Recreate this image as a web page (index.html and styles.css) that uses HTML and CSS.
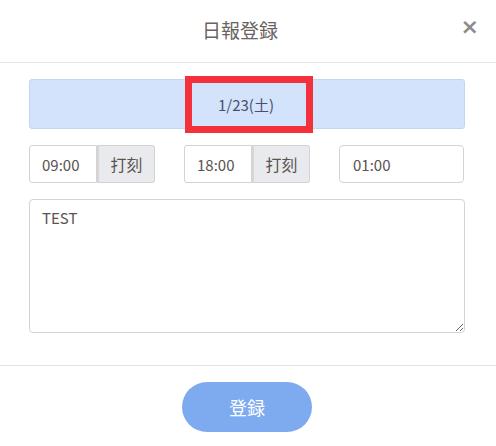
FILE: index.html
```html
<!DOCTYPE html>
<html lang="ja">
<head>
<meta charset="utf-8">
<link rel="stylesheet" href="styles.css">
</head>
<body>
<div class="modal">
  <div class="modal-header">
    <h1 class="title">日報登録</h1>
    <span class="close">×</span>
  </div>
  <div class="modal-body">
    <div class="date-bar">
      <span class="date-text">1/23(土)</span>
      <span class="highlight"></span>
    </div>
    <div class="time-row">
      <div class="group">
        <div class="field">09:00</div>
        <div class="stamp">打刻</div>
      </div>
      <div class="group">
        <div class="field">18:00</div>
        <div class="stamp">打刻</div>
      </div>
      <div class="group">
        <div class="field single">01:00</div>
      </div>
    </div>
    <textarea class="memo">TEST</textarea>
  </div>
  <div class="modal-footer">
    <button class="submit">登録</button>
  </div>
</div>
</body>
</html>
```
FILE: styles.css
```css
* { box-sizing: border-box; }
html, body { margin: 0; padding: 0; background: #fff; }
body {
  font-family: "Noto Sans CJK JP", "Open Sans", sans-serif;
  color: #5a5350;
  width: 496px;
  height: 446px;
  overflow: hidden;
}
.modal-header {
  height: 63px;
  border-bottom: 1px solid #e3e3e3;
  display: flex;
  align-items: center;
  justify-content: center;
  position: relative;
}
.title {
  margin: -4px 16px 0 0;
  font-size: 19px;
  font-weight: 400;
  color: #6a6361;
  line-height: 1;
}
.close {
  position: absolute;
  right: 17px;
  top: 16px;
  font-size: 22px;
  font-weight: 700;
  color: #8c8c8c;
  line-height: 1;
  font-family: "DejaVu Sans", sans-serif;
}
.modal-body {
  padding: 16px 31px 32px 29px;
}
.date-bar {
  position: relative;
  height: 50px;
  background: #d3e3fb;
  border: 1px solid #c2d6f3;
  border-radius: 3px;
  display: flex;
  align-items: center;
  justify-content: center;
  font-size: 15px;
  color: #4a4f6b;
}
.date-text { margin-left: -2px; }
.highlight {
  position: absolute;
  left: 155px;
  top: -4px;
  width: 128px;
  height: 57px;
  border: 7px solid #f4303b;
}
.time-row {
  margin-top: 16px;
  display: grid;
  grid-template-columns: 126px 126px 126px;
  column-gap: 29px;
}
.group {
  display: flex;
  height: 38px;
}
.field {
  width: 68px;
  height: 38px;
  border: 1px solid #d3d3d3;
  border-radius: 3px 0 0 3px;
  display: flex;
  align-items: center;
  padding-left: 12px;
  font-size: 15px;
  color: #5a5350;
}
.field.single {
  width: 125px;
  border-radius: 4px;
  padding-left: 13px;
}
.stamp {
  width: 58px;
  height: 38px;
  background: #e8eaed;
  border: 1px solid #d3d3d3;
  border-left: 2px solid #d6d6d6;
  border-radius: 0 3px 3px 0;
  display: flex;
  align-items: center;
  justify-content: center;
  font-size: 16px;
  color: #5a5350;
}
.memo {
  display: block;
  margin-top: 16px;
  width: 436px;
  height: 134px;
  border: 1px solid #d3d3d3;
  border-radius: 4px;
  padding: 7px 12px;
  font-family: "Noto Sans CJK JP", "Open Sans", sans-serif;
  font-size: 15px;
  color: #5a5350;
  resize: both;
  outline: none;
}
.modal-footer {
  border-top: 1px solid #e3e3e3;
  padding-top: 16px;
  display: flex;
  justify-content: center;
}
.submit {
  width: 130px;
  height: 50px;
  border: none;
  border-radius: 25px;
  background: #7eaaf0;
  color: #fff;
  font-family: "Noto Sans CJK JP", sans-serif;
  font-size: 18px;
  margin-left: -2px;
}
```
